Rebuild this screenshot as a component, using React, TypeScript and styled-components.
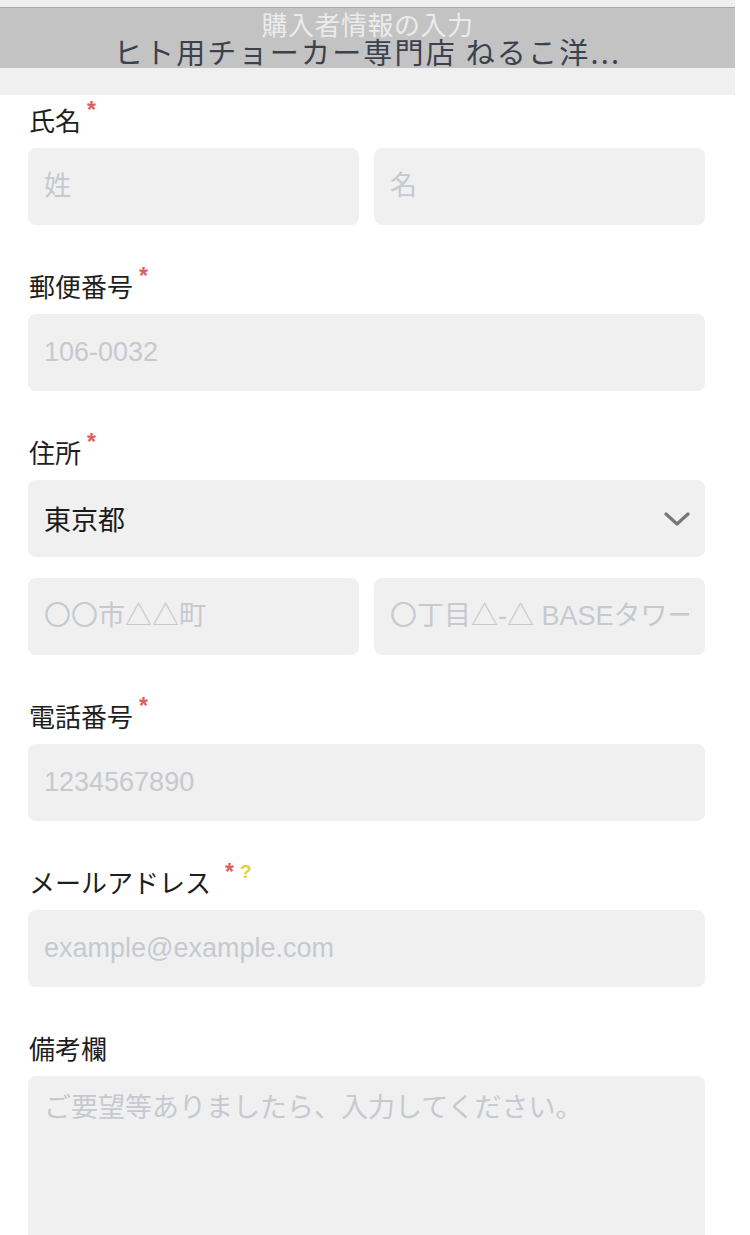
import React from "react";
import styled, { createGlobalStyle } from "styled-components";

const GlobalStyle = createGlobalStyle`
  html, body {
    margin: 0;
    padding: 0;
    background: #ffffff;
  }
  body {
    font-family: "Liberation Sans", "Noto Sans CJK JP", sans-serif;
    -webkit-font-smoothing: antialiased;
  }
  * { box-sizing: border-box; }
`;

const Page = styled.div`
  width: 735px;
  background: #ffffff;
  overflow: hidden;
  height: 1235px;
`;

const TopStrip = styled.div`
  height: 8px;
  background: #efefef;
  border-bottom: 1px solid #a9a9a9;
`;

const HeaderBar = styled.header`
  height: 60px;
  background: #c3c3c3;
  display: flex;
  flex-direction: column;
  align-items: center;
  justify-content: center;
`;

const SubTitle = styled.div`
  font-family: "Noto Sans CJK JP", sans-serif;
  font-size: 26px;
  line-height: 24px;
  height: 24px;
  color: #ebebeb;
  letter-spacing: 0.5px;
  margin-top: -2px;
`;

const ShopTitle = styled.div`
  font-family: "Noto Sans CJK JP", sans-serif;
  font-size: 29px;
  line-height: 24px;
  height: 24px;
  color: #3c414e;
  letter-spacing: 2.2px;
  white-space: nowrap;
  margin-top: 3px;
`;

const Spacer = styled.div`
  height: 27px;
  background: #f0f0f0;
`;

const Form = styled.form`
  display: flex;
  flex-direction: column;
  gap: 40px;
  padding: 4px 30px 0 28px;
`;

const Field = styled.div`
  display: flex;
  flex-direction: column;
`;

const Label = styled.div`
  display: flex;
  align-items: center;
  height: 40px;
  margin-bottom: 9px;
  font-family: "Noto Sans CJK JP", sans-serif;
  font-size: 26px;
  color: #1e1e1e;
  padding-left: 1px;
`;

const Mark = styled.span<{ $tone: "red" | "yellow"; $gap: number }>`
  font-family: "Liberation Sans", sans-serif;
  font-weight: bold;
  font-size: ${(p) => (p.$tone === "red" ? "23px" : "19px")};
  line-height: 1;
  align-self: flex-start;
  margin-top: ${(p) => (p.$tone === "red" ? "0px" : "1px")};
  margin-left: ${(p) => p.$gap}px;
  color: ${(p) => (p.$tone === "red" ? "#e35d5d" : "#dcd23c")};
`;

const Row = styled.div`
  display: grid;
  grid-template-columns: 1fr 1fr;
  gap: 15px;
`;

const Stack = styled.div`
  display: flex;
  flex-direction: column;
  gap: 21px;
`;

const fieldBase = `
  width: 100%;
  border: none;
  outline: none;
  background: #f0f0f0;
  border-radius: 8px;
  font-family: "Liberation Sans", "Noto Sans CJK JP", sans-serif;
  font-size: 27px;
  color: #1e1e1e;
  padding: 0 16px;
  &::placeholder {
    color: #c6c9cf;
    opacity: 1;
  }
`;

const TextInput = styled.input`
  ${fieldBase}
  height: 77px;
  display: block;
`;

const SelectWrap = styled.div`
  position: relative;
  height: 77px;
`;

const Select = styled.select`
  ${fieldBase}
  height: 77px;
  appearance: none;
  -webkit-appearance: none;
  font-family: "Noto Sans CJK JP", sans-serif;
  color: #1a1a1a;
`;

const Chevron = styled.svg`
  position: absolute;
  right: 15px;
  top: 31px;
  width: 26px;
  height: 16px;
  pointer-events: none;
`;

const TextArea = styled.textarea`
  ${fieldBase}
  height: 200px;
  resize: none;
  padding-top: 14px;
  line-height: 36px;
  display: block;
`;

const RequiredMark = ({ gap = 6 }: { gap?: number }) => (
  <Mark $tone="red" $gap={gap}>
    *
  </Mark>
);

export default function App() {
  return (
    <>
      <GlobalStyle />
      <Page>
        <TopStrip />
        <HeaderBar>
          <SubTitle>購入者情報の入力</SubTitle>
          <ShopTitle>ヒト用チョーカー専門店 ねるこ洋...</ShopTitle>
        </HeaderBar>
        <Spacer />
        <Form onSubmit={(e) => e.preventDefault()}>
          <Field>
            <Label>
              氏名
              <RequiredMark />
            </Label>
            <Row>
              <TextInput placeholder="姓" />
              <TextInput placeholder="名" />
            </Row>
          </Field>
          <Field>
            <Label>
              郵便番号
              <RequiredMark />
            </Label>
            <TextInput placeholder="106-0032" />
          </Field>
          <Field>
            <Label>
              住所
              <RequiredMark />
            </Label>
            <Stack>
              <SelectWrap>
                <Select defaultValue="東京都">
                  <option value="東京都">東京都</option>
                </Select>
                <Chevron viewBox="0 0 26 16">
                  <polyline
                    points="2,3 13,13 24,3"
                    fill="none"
                    stroke="#777777"
                    strokeWidth="3.2"
                    strokeLinecap="round"
                    strokeLinejoin="round"
                  />
                </Chevron>
              </SelectWrap>
              <Row>
                <TextInput placeholder="〇〇市△△町" />
                <TextInput placeholder="〇丁目△-△ BASEタワー" />
              </Row>
            </Stack>
          </Field>
          <Field>
            <Label>
              電話番号
              <RequiredMark />
            </Label>
            <TextInput placeholder="1234567890" />
          </Field>
          <Field>
            <Label>
              メールアドレス
              <RequiredMark gap={14} />
              <Mark $tone="yellow" $gap={6}>
                ?
              </Mark>
            </Label>
            <TextInput placeholder="example@example.com" />
          </Field>
          <Field>
            <Label>備考欄</Label>
            <TextArea placeholder="ご要望等ありましたら、入力してください。" />
          </Field>
        </Form>
      </Page>
    </>
  );
}
